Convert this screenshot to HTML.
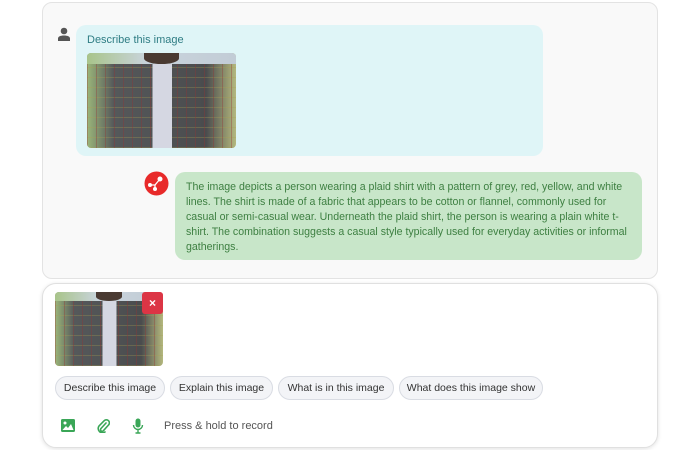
<!DOCTYPE html>
<html><head><style>
*{margin:0;padding:0;box-sizing:border-box}
body{width:700px;height:450px;background:#fff;font-family:"Liberation Sans",sans-serif;position:relative;overflow:hidden}
.top{position:absolute;left:42px;top:2px;width:616px;height:277px;background:#f9f9f9;border:1px solid #e3e3e3;border-radius:10px}
.ub{position:absolute;left:76px;top:25px;width:467px;height:131px;background:#dff5f7;border-radius:10px}
.ub .t{position:absolute;left:11px;top:9px;font-size:11px;color:#2f7d84}
.photo{position:absolute;overflow:hidden;border-radius:4px;
background:
linear-gradient(90deg,transparent 44%,#d5d7e2 44%,#d5d7e2 57%,transparent 57%),
repeating-linear-gradient(90deg,rgba(150,50,50,.35) 0 1px,transparent 1px 9px),
repeating-linear-gradient(0deg,rgba(170,160,80,.3) 0 1px,transparent 1px 10px),
linear-gradient(90deg,#9bb67a 0,#55585a 18%,#4a4c4e 80%,#b4b87e 100%)}
.photo::before{content:"";position:absolute;left:0;top:0;right:0;height:12%;background:linear-gradient(90deg,#a8c48a,#c9d4dc 40%,#c2ccd6)}
.photo::after{content:"";position:absolute;left:38%;top:0;width:24%;height:12%;background:#4a3a32;border-radius:0 0 50% 50%}
.bb{position:absolute;left:175px;top:172px;width:467px;height:88px;background:#c8e6c9;border-radius:10px;padding:8px 10px 0 11px;font-size:10.6px;line-height:15px;color:#3d7f41}
.bot{position:absolute;left:42px;top:283px;width:616px;height:165px;background:#fff;border:1px solid #e0e0e0;border-radius:14px;box-shadow:0 1px 4px rgba(0,0,0,.12)}
.x{position:absolute;left:142px;top:292px;width:21px;height:22px;background:#dc3545;border-radius:3px;color:#fff;font-size:12px;font-weight:bold;text-align:center;line-height:22px}
.chip{position:absolute;top:376px;height:24px;border:1px solid #d9dce3;background:#f3f4f7;border-radius:12px;font-size:10.5px;color:#333;text-align:center;line-height:22px}
.rec{position:absolute;left:164px;top:420px;font-size:11px;color:#555}
</style></head><body>
<div class="top"></div>
<svg style="position:absolute;left:57px;top:27px" width="14" height="14" viewBox="0 0 14 14"><circle cx="7" cy="4" r="3.3" fill="#555"/><path d="M1 14v-2.5C1 9.5 3.5 8.5 7 8.5s6 1 6 3V14z" fill="#555"/></svg>
<div class="ub"><div class="t">Describe this image</div></div>
<div class="photo" style="left:87px;top:53px;width:149px;height:95px"></div>
<svg style="position:absolute;left:144px;top:171px" width="25" height="25" viewBox="0 0 25 25"><circle cx="12.5" cy="12.5" r="12" fill="#e82a2a"/><circle cx="16" cy="8" r="2.5" fill="#fff"/><circle cx="6" cy="14" r="2" fill="#fff"/><circle cx="11" cy="18" r="2" fill="#fff"/><path d="M16 8L11 14 6 14M11 14v4" stroke="#fff" stroke-width="1.3" fill="none"/></svg>
<div class="bb">The image depicts a person wearing a plaid shirt with a pattern of grey, red, yellow, and white lines. The shirt is made of a fabric that appears to be cotton or flannel, commonly used for casual or semi-casual wear. Underneath the plaid shirt, the person is wearing a plain white t-shirt. The combination suggests a casual style typically used for everyday activities or informal gatherings.</div>
<div class="bot"></div>
<div class="photo" style="left:55px;top:292px;width:108px;height:74px"></div>
<div class="x">×</div>
<div class="chip" style="left:55px;width:110px">Describe this image</div>
<div class="chip" style="left:170px;width:103px">Explain this image</div>
<div class="chip" style="left:278px;width:116px">What is in this image</div>
<div class="chip" style="left:399px;width:144px">What does this image show</div>
<svg style="position:absolute;left:61px;top:419px" width="14" height="13" viewBox="0 0 14 13"><rect width="14" height="13" rx="1.5" fill="#3aa657"/><circle cx="4" cy="4" r="1.5" fill="#fff"/><path d="M1.5 11l3.5-4 2 2 3-4 2.5 6z" fill="#fff"/></svg>
<svg style="position:absolute;left:96px;top:418px" width="14" height="15" viewBox="0 0 14 15"><path d="M10 5L5 10.5a1.6 1.6 0 0 0 2.3 2.3L12.5 7a3 3 0 0 0-4.3-4.3L3 8a4.3 4.3 0 0 0 6 6" stroke="#3aa657" stroke-width="1.6" fill="none" stroke-linecap="round"/></svg>
<svg style="position:absolute;left:132px;top:418px" width="12" height="16" viewBox="0 0 12 16"><rect x="3.5" y="0.5" width="5" height="9" rx="2.5" fill="#3aa657"/><path d="M1.5 7a4.5 4.5 0 0 0 9 0M6 11.5V15M3.5 15h5" stroke="#3aa657" stroke-width="1.4" fill="none"/></svg>
<div class="rec">Press &amp; hold to record</div>
</body></html>
